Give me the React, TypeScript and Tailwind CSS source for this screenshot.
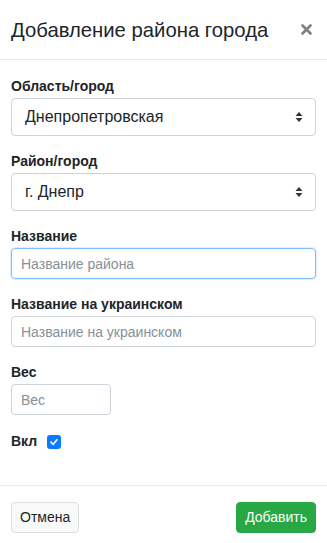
import React from "react";

const font = { fontFamily: '"Liberation Sans", Arial, sans-serif' };

const SelectArrows = () => (
  <svg width="8" height="12" viewBox="0 0 8 12" className="shrink-0">
    <path d="M4 1 L7.5 5 L0.5 5 Z" fill="#333" />
    <path d="M4 11 L7.5 7 L0.5 7 Z" fill="#333" />
  </svg>
);

const FakeSelect = ({ value }: { value: string }) => (
  <div className="flex h-[38px] w-full items-center justify-between rounded-[4px] border border-[#ced4da] bg-white pl-[13px] pr-[12px] text-[16px] text-[#212529]">
    <span>{value}</span>
    <SelectArrows />
  </div>
);

const Label = ({ children }: { children: React.ReactNode }) => (
  <label className="mb-[1px] block text-[14px] font-bold leading-[21px] text-[#212529]">{children}</label>
);

export default function App() {
  return (
    <div className="h-[543px] w-[327px] bg-white text-[#212529]" style={font}>
      {/* header */}
      <div className="flex h-[60px] items-center justify-between border-b border-[#e9ecef] pl-[11px] pr-[13px]">
        <h5 className="text-[20.3px] leading-[24px] text-[#212529]">Добавление района города</h5>
        <button className="flex h-[16px] w-[16px] items-center justify-center">
          <svg width="11" height="11" viewBox="0 0 11 11">
            <path d="M1.5 1.5 L9.5 9.5 M9.5 1.5 L1.5 9.5" stroke="#808080" strokeWidth="2.6" strokeLinecap="round" />
          </svg>
        </button>
      </div>

      {/* body */}
      <div className="px-[11px] pt-[16px] pb-[33px]">
        <div className="mb-[15px]">
          <Label>Область/город</Label>
          <FakeSelect value="Днепропетровская" />
        </div>
        <div className="mb-[15px]">
          <Label>Район/город</Label>
          <FakeSelect value="г. Днепр" />
        </div>
        <div className="mb-[15px]">
          <Label>Название</Label>
          <input
            autoFocus
            placeholder="Название района"
            className="block h-[31px] w-full rounded-[4px] border border-[#80bdff] px-[9px] text-[14px] text-[#495057] caret-black outline-none shadow-[0_0_0_1px_rgba(0,123,255,0.12)] placeholder:text-[#8a9096]"
          />
        </div>
        <div className="mb-[15px]">
          <Label>Название на украинском</Label>
          <input
            placeholder="Название на украинском"
            className="block h-[31px] w-full rounded-[4px] border border-[#ced4da] px-[9px] text-[14px] outline-none placeholder:text-[#8a9096]"
          />
        </div>
        <div className="mb-[16px]">
          <Label>Вес</Label>
          <input
            placeholder="Вес"
            className="block h-[31px] w-[100px] rounded-[4px] border border-[#ced4da] px-[9px] text-[14px] outline-none placeholder:text-[#8a9096]"
          />
        </div>
        <div className="flex items-center gap-[10px]">
          <span className="text-[14px] font-bold leading-[21px]">Вкл</span>
          <span className="flex h-[14px] w-[14px] items-center justify-center rounded-[3px] bg-[#0a7bff]">
            <svg width="10" height="10" viewBox="0 0 10 10">
              <path d="M2 5.2 L4.2 7.3 L8 2.8" stroke="#fff" strokeWidth="1.7" fill="none" strokeLinecap="round" strokeLinejoin="round" />
            </svg>
          </span>
        </div>
      </div>

      {/* footer */}
      <div className="flex items-center justify-between border-t border-[#e9ecef] px-[11px] pt-[16px]">
        <button className="h-[31px] rounded-[4px] border border-[#dcdfe2] bg-[#f8f9fa] px-[8px] text-[14px] text-[#212529]">
          Отмена
        </button>
        <button className="h-[31px] rounded-[4px] border border-[#28a745] bg-[#28a745] px-[8px] text-[14px] text-white">
          Добавить
        </button>
      </div>
    </div>
  );
}
